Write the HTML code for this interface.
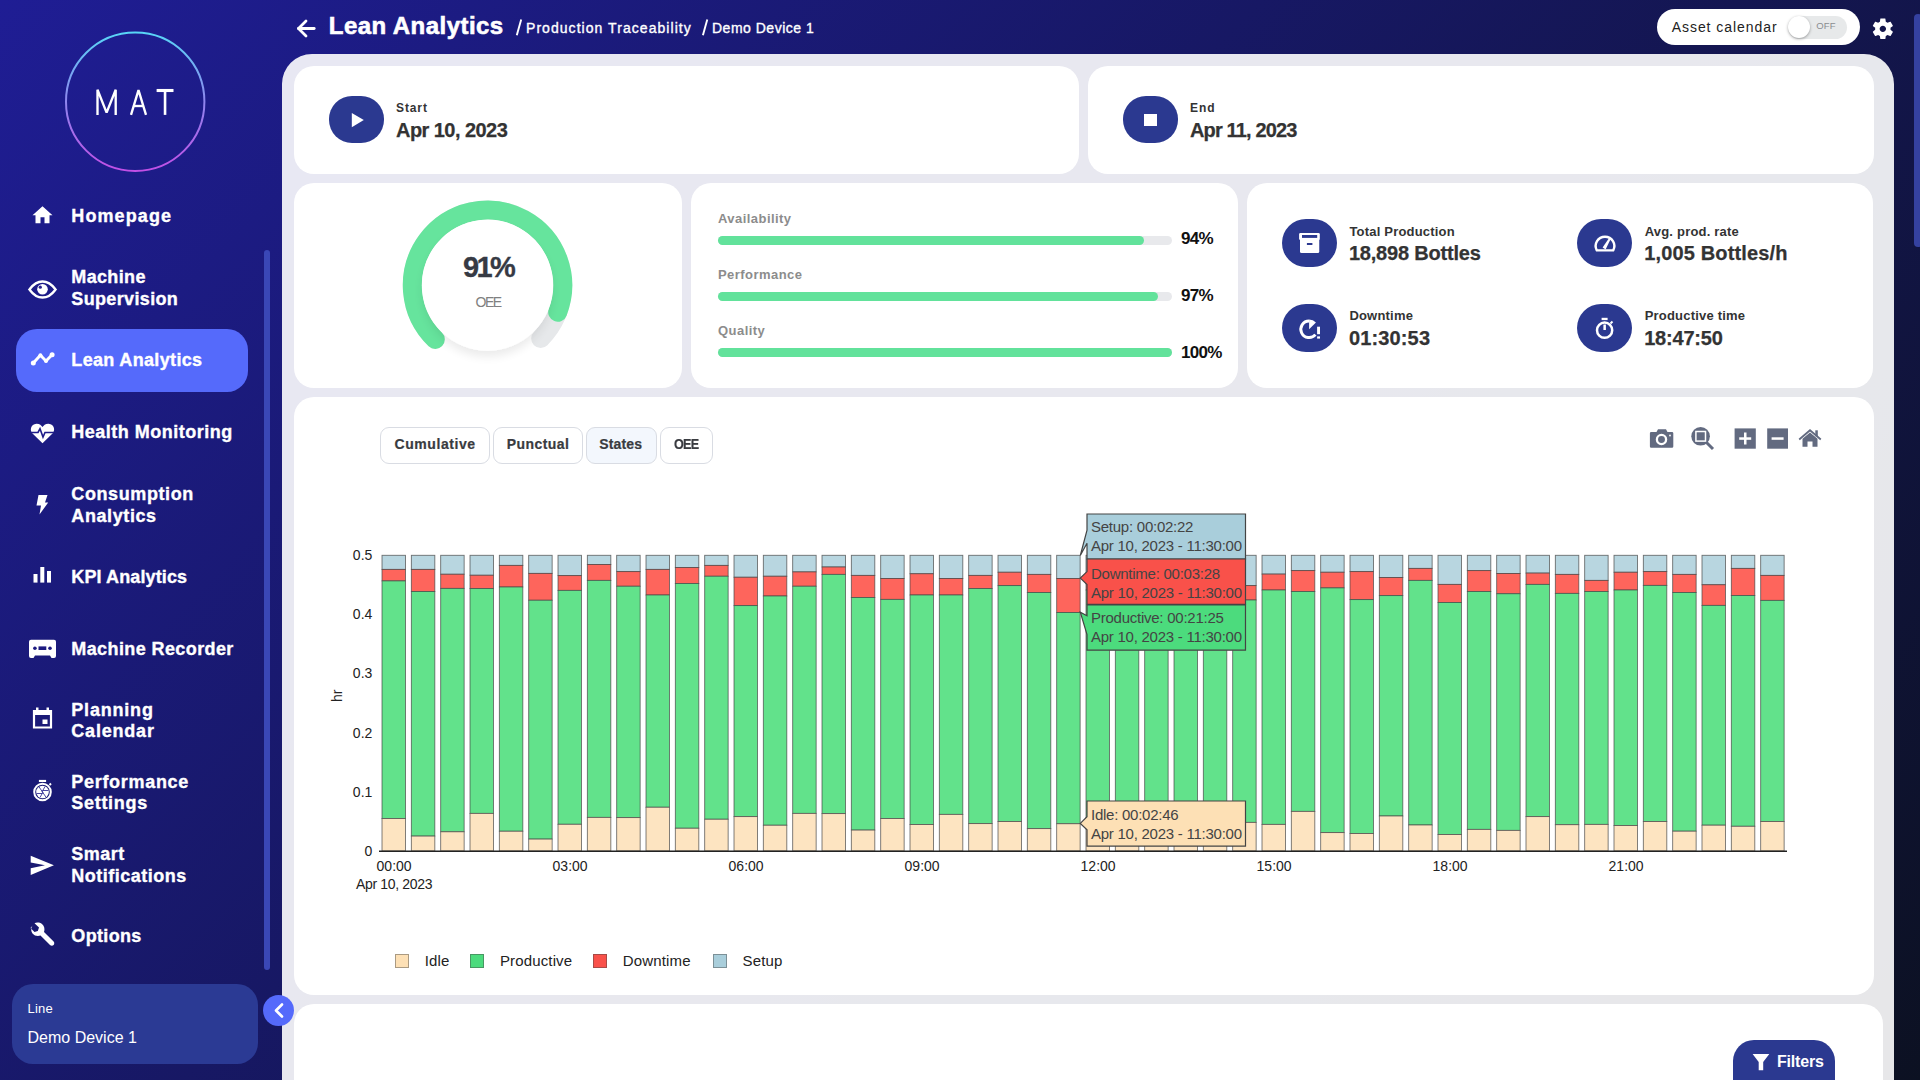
<!DOCTYPE html>
<html><head><meta charset="utf-8"><title>Lean Analytics</title>
<style>
html,body{margin:0;padding:0;width:1920px;height:1080px;overflow:hidden}
body{position:relative;background:linear-gradient(135deg,#1f1d94 0%,#0c1122 100%);font-family:"Liberation Sans", sans-serif}
.abs{position:absolute}
.t{position:absolute;line-height:1;white-space:nowrap;font-family:"Liberation Sans", sans-serif}
</style></head><body>
<svg class="abs" style="left:296px;top:18px" width="22" height="21" viewBox="0 0 22 21"><g fill="none" stroke="#fff" stroke-width="2.8" stroke-linecap="round" stroke-linejoin="round"><line x1="2.5" y1="10.5" x2="18.2" y2="10.5"/><polyline points="10,3 2.5,10.5 10,18"/></g></svg>
<div class="t" style="left:328.80px;top:14.20px;font-size:24px;font-weight:bold;color:#fff;letter-spacing:0.45px;-webkit-text-stroke:0.6px #fff;">Lean Analytics</div>
<svg class="abs" style="left:0;top:0" width="900" height="50"><g stroke="#fff" stroke-width="1.9" stroke-linecap="butt"><line x1="516.8" y1="35.3" x2="521.2" y2="19.4"/><line x1="702.9" y1="35.3" x2="707.3" y2="19.4"/></g></svg>
<div class="t" style="left:526.00px;top:20.78px;font-size:14px;font-weight:normal;color:#fff;letter-spacing:1.05px;-webkit-text-stroke:0.35px #fff;">Production Traceability</div>
<div class="t" style="left:712.00px;top:20.78px;font-size:14px;font-weight:normal;color:#fff;letter-spacing:0.5px;-webkit-text-stroke:0.35px #fff;">Demo Device 1</div>
<div class="abs" style="left:1657px;top:9px;width:203px;height:36px;border-radius:18px;background:#fff"></div>
<div class="t" style="left:1671.70px;top:20.08px;font-size:14px;font-weight:normal;color:#222;letter-spacing:0.95px;">Asset calendar</div>
<div class="abs" style="left:1787.5px;top:15.6px;width:59px;height:23px;border-radius:11.5px;background:#e7e9ea"></div>
<div class="t" style="left:1816.30px;top:21.49px;font-size:9.5px;font-weight:normal;color:#8a8d90;letter-spacing:0.1px;">OFF</div>
<div class="abs" style="left:1787.7px;top:16px;width:22px;height:22px;border-radius:50%;background:#fff;box-shadow:0 1px 3px rgba(0,0,0,0.35)"></div>
<svg class="abs" style="left:1869.6px;top:15.5px" width="25.7" height="25.7" viewBox="0 0 24 24"><path fill="#fff" d="M19.14 12.94c.04-.3.06-.61.06-.94 0-.32-.02-.64-.07-.94l2.03-1.58c.18-.14.23-.41.12-.61l-1.92-3.32c-.12-.22-.37-.29-.59-.22l-2.39.96c-.5-.38-1.03-.7-1.62-.94l-.36-2.54c-.04-.24-.24-.41-.48-.41h-3.84c-.24 0-.43.17-.47.41l-.36 2.54c-.59.24-1.13.57-1.62.94l-2.39-.96c-.22-.08-.47 0-.59.22L2.74 8.87c-.12.21-.08.47.12.61l2.03 1.58c-.05.3-.09.63-.09.94s.02.64.07.94l-2.03 1.58c-.18.14-.23.41-.12.61l1.92 3.32c.12.22.37.29.59.22l2.39-.96c.5.38 1.03.7 1.62.94l.36 2.54c.05.24.24.41.48.41h3.84c.24 0 .44-.17.47-.41l.36-2.54c.59-.24 1.13-.56 1.62-.94l2.39.96c.22.08.47 0 .59-.22l1.92-3.32c.12-.22.07-.47-.12-.61l-2.01-1.58zM12 15c-1.65 0-3-1.35-3-3s1.35-3 3-3 3 1.35 3 3-1.35 3-3 3z"/></svg>
<div class="abs" style="left:1914px;top:14px;width:8px;height:233px;border-radius:4px;background:#3541a0"></div>
<div class="abs" style="left:282px;top:54px;width:1612px;height:1100px;border-radius:30px 30px 0 0;background:rgba(255,255,255,0.9)"></div>
<div class="abs" style="left:294px;top:66px;width:785px;height:108px;border-radius:20px;background:#fff"></div>
<div class="abs" style="left:1088px;top:66px;width:786px;height:108px;border-radius:20px;background:#fff"></div>
<div class="abs" style="left:294px;top:183px;width:388px;height:205px;border-radius:20px;background:#fff"></div>
<div class="abs" style="left:691px;top:183px;width:547px;height:205px;border-radius:20px;background:#fff"></div>
<div class="abs" style="left:1247px;top:183px;width:626px;height:205px;border-radius:20px;background:#fff"></div>
<div class="abs" style="left:294px;top:397px;width:1580px;height:598px;border-radius:20px;background:#fff"></div>
<div class="abs" style="left:294px;top:1004px;width:1589px;height:196px;border-radius:20px;background:#fff"></div>
<div class="abs" style="left:329px;top:96px;width:55px;height:47px;border-radius:23px / 23px;background:#2b3990"></div>
<svg class="abs" style="left:329px;top:96px" width="55" height="47"><polygon points="22.8,17 34.8,24.1 22.8,31.2" fill="#fff"/></svg>
<div class="t" style="left:396.00px;top:101.60px;font-size:12px;font-weight:bold;color:#333;letter-spacing:0.9px;">Start</div>
<div class="t" style="left:396.00px;top:120.23px;font-size:20px;font-weight:bold;color:#333;letter-spacing:-0.55px;-webkit-text-stroke:0.25px #333;">Apr 10, 2023</div>
<div class="abs" style="left:1123px;top:96px;width:55px;height:47px;border-radius:23px;background:#2b3990"></div>
<div class="abs" style="left:1144.4px;top:114.2px;width:13px;height:12px;background:#fff"></div>
<div class="t" style="left:1190.00px;top:101.60px;font-size:12px;font-weight:bold;color:#333;letter-spacing:0.9px;">End</div>
<div class="t" style="left:1190.00px;top:120.23px;font-size:20px;font-weight:bold;color:#333;letter-spacing:-0.85px;-webkit-text-stroke:0.25px #333;">Apr 11, 2023</div>
<svg class="abs" style="left:0;top:0" width="700" height="400" viewBox="0 0 700 400">
<defs><filter id="sh" x="-30%" y="-30%" width="160%" height="170%"><feGaussianBlur in="SourceAlpha" stdDeviation="5"/><feOffset dy="6"/><feComponentTransfer><feFuncA type="linear" slope="0.08"/></feComponentTransfer><feMerge><feMergeNode/><feMergeNode in="SourceGraphic"/></feMerge></filter></defs>
<path d="M435.26,339.39 A75.2,75.2 0 1 1 540.67,338.47" fill="none" stroke="#e6e8ea" stroke-width="19" stroke-linecap="round"/>
<path d="M435.26,339.39 A75.2,75.2 0 1 1 557.71,312.25" fill="none" stroke="#66e49d" stroke-width="19" stroke-linecap="round"/>
<circle cx="487.5" cy="285.3" r="65.5" fill="#fff" filter="url(#sh)"/>
</svg>
<div class="t" style="left:288.20px;width:400px;text-align:center;top:253.20px;font-size:29px;font-weight:bold;color:#363a44;letter-spacing:-2.6px;-webkit-text-stroke:0.3px #363a44;">91%</div>
<div class="t" style="left:288.10px;width:400px;text-align:center;top:295.08px;font-size:14px;font-weight:normal;color:#808080;letter-spacing:-1.4px;">OEE</div>
<div class="t" style="left:718.00px;top:211.84px;font-size:13px;font-weight:bold;color:#8c8c8c;letter-spacing:0.45px;">Availability</div>
<div class="abs" style="left:718px;top:235.9px;width:454px;height:9px;border-radius:4.5px;background:#e8e9ec"></div>
<div class="abs" style="left:718px;top:235.9px;width:425.8px;height:9px;border-radius:4.5px;background:#62e29b"></div>
<div class="t" style="left:1181.00px;top:230.41px;font-size:17px;font-weight:bold;color:#111;letter-spacing:-0.7px;">94%</div>
<div class="t" style="left:718.00px;top:267.84px;font-size:13px;font-weight:bold;color:#8c8c8c;letter-spacing:0.45px;">Performance</div>
<div class="abs" style="left:718px;top:291.9px;width:454px;height:9px;border-radius:4.5px;background:#e8e9ec"></div>
<div class="abs" style="left:718px;top:291.9px;width:439.6px;height:9px;border-radius:4.5px;background:#62e29b"></div>
<div class="t" style="left:1181.00px;top:287.41px;font-size:17px;font-weight:bold;color:#111;letter-spacing:-0.7px;">97%</div>
<div class="t" style="left:718.00px;top:323.84px;font-size:13px;font-weight:bold;color:#8c8c8c;letter-spacing:0.45px;">Quality</div>
<div class="abs" style="left:718px;top:348.2px;width:454px;height:9px;border-radius:4.5px;background:#e8e9ec"></div>
<div class="abs" style="left:718px;top:348.2px;width:454.0px;height:9px;border-radius:4.5px;background:#62e29b"></div>
<div class="t" style="left:1181.00px;top:343.61px;font-size:17px;font-weight:bold;color:#111;letter-spacing:-0.7px;">100%</div>
<div class="abs" style="left:1282px;top:219px;width:55px;height:48px;border-radius:24px;background:#2b3990"></div>
<div class="t" style="left:1349.40px;top:225.24px;font-size:13px;font-weight:bold;color:#333;letter-spacing:0.2px;">Total Production</div>
<div class="t" style="left:1348.90px;top:243.03px;font-size:20px;font-weight:bold;color:#333;letter-spacing:-0.2px;-webkit-text-stroke:0.25px #333;">18,898 Bottles</div>
<svg class="abs" style="left:1282px;top:219px" width="55" height="48" fill="#fff"><rect x="17.1" y="14" width="20.7" height="7" rx="1.3"/><path d="M18,20 H37.25 V32.6 Q37.25,34.1 35.75,34.1 H19.5 Q18,34.1 18,32.6 Z"/><rect x="20" y="16" width="15.2" height="2.9" fill="#2b3990"/><rect x="24.9" y="24" width="5.5" height="2" fill="#2b3990"/></svg>
<div class="abs" style="left:1577px;top:219px;width:55px;height:48px;border-radius:24px;background:#2b3990"></div>
<div class="t" style="left:1644.70px;top:225.24px;font-size:13px;font-weight:bold;color:#333;letter-spacing:0.2px;">Avg. prod. rate</div>
<div class="t" style="left:1644.20px;top:243.03px;font-size:20px;font-weight:bold;color:#333;letter-spacing:0.15px;-webkit-text-stroke:0.25px #333;">1,005 Bottles/h</div>
<svg class="abs" style="left:1577px;top:219px" width="55" height="48"><path d="M19.8,31.4 A9.3,9.3 0 1 1 36.2,31.4 Z" fill="none" stroke="#fff" stroke-width="2.4" stroke-linejoin="round"/><path d="M25.6,28.6 L31.8,19.6 L33.4,20.6 L28.6,30.4 Z" fill="#fff"/></svg>
<div class="abs" style="left:1282px;top:303.5px;width:55px;height:48px;border-radius:24px;background:#2b3990"></div>
<div class="t" style="left:1349.40px;top:309.34px;font-size:13px;font-weight:bold;color:#333;letter-spacing:0.2px;">Downtime</div>
<div class="t" style="left:1348.90px;top:327.63px;font-size:20px;font-weight:bold;color:#333;letter-spacing:0.15px;-webkit-text-stroke:0.25px #333;">01:30:53</div>
<svg class="abs" style="left:1282px;top:303.5px" width="55" height="48"><path d="M27.1,17.05 A8.25,8.25 0 1 0 33.42,30.6" fill="none" stroke="#fff" stroke-width="2.9"/><path d="M27.1,25.3 L27.1,15.6 A9.7,9.7 0 0 1 33.96,18.44 Z" fill="#fff"/><rect x="35.1" y="22.7" width="2.9" height="7.5" fill="#fff"/><rect x="35.1" y="32.4" width="2.9" height="2.2" fill="#fff"/></svg>
<div class="abs" style="left:1577px;top:303.5px;width:55px;height:48px;border-radius:24px;background:#2b3990"></div>
<div class="t" style="left:1644.70px;top:309.34px;font-size:13px;font-weight:bold;color:#333;letter-spacing:0.2px;">Productive time</div>
<div class="t" style="left:1644.20px;top:327.63px;font-size:20px;font-weight:bold;color:#333;letter-spacing:-0.2px;-webkit-text-stroke:0.25px #333;">18:47:50</div>
<svg class="abs" style="left:1577px;top:303.5px" width="55" height="48"><circle cx="27.6" cy="26.2" r="7.6" fill="none" stroke="#fff" stroke-width="2.5"/><rect x="24.6" y="13.8" width="6" height="2.3" fill="#fff"/><rect x="26.4" y="20.5" width="2.5" height="5.5" fill="#fff"/><line x1="33.5" y1="19.5" x2="35.5" y2="17.5" stroke="#fff" stroke-width="2"/></svg>
<div class="abs" style="left:380.4px;top:427.4px;width:109.9px;height:36.8px;box-sizing:border-box;border:1px solid #d9dce3;border-radius:9px;background:#fff"></div>
<div class="t" style="left:394.60px;top:437.18px;font-size:14px;font-weight:bold;color:#393b40;letter-spacing:0.55px;-webkit-text-stroke:0.2px #393b40;">Cumulative</div>
<div class="abs" style="left:493.4px;top:427.4px;width:89.3px;height:36.8px;box-sizing:border-box;border:1px solid #d9dce3;border-radius:9px;background:#fff"></div>
<div class="t" style="left:506.70px;top:437.18px;font-size:14px;font-weight:bold;color:#393b40;letter-spacing:0.45px;-webkit-text-stroke:0.2px #393b40;">Punctual</div>
<div class="abs" style="left:585.5px;top:427.4px;width:71.8px;height:36.8px;box-sizing:border-box;border:1px solid #d9dce3;border-radius:9px;background:#f3f7fd"></div>
<div class="t" style="left:599.30px;top:437.18px;font-size:14px;font-weight:bold;color:#393b40;letter-spacing:0.15px;-webkit-text-stroke:0.2px #393b40;">States</div>
<div class="abs" style="left:659.5px;top:427.4px;width:53.2px;height:36.8px;box-sizing:border-box;border:1px solid #d9dce3;border-radius:9px;background:#fff"></div>
<div class="t" style="left:673.50px;top:437.18px;font-size:14px;font-weight:bold;color:#393b40;letter-spacing:-0.8px;-webkit-text-stroke:0.2px #393b40;transform:scaleX(0.9);transform-origin:0 0;">OEE</div>
<svg class="abs" style="left:1640px;top:420px" width="190" height="40" viewBox="1640 420 190 40">
<path fill="#626a80" d="M1652,432 H1656.5 L1658,429.2 H1666 L1667.5,432 H1672 Q1673.3,432 1673.3,433.3 V446.4 Q1673.3,447.7 1672,447.7 H1651.2 Q1649.9,447.7 1649.9,446.4 V433.3 Q1649.9,432 1651.2,432 Z"/>
<circle cx="1661.5" cy="439.5" r="4.6" fill="none" stroke="#fff" stroke-width="2.3"/>
<circle cx="1670" cy="435.5" r="0.9" fill="#fff"/>
<circle cx="1700.6" cy="436.3" r="9.3" fill="#626a80"/>
<rect x="1695.9" y="431.5" width="9.6" height="9.6" fill="none" stroke="#fff" stroke-width="1.5"/>
<line x1="1706.5" y1="442.5" x2="1713" y2="449" stroke="#626a80" stroke-width="3"/>
<rect x="1734.6" y="428.4" width="21.2" height="20.3" fill="#626a80"/>
<rect x="1739.2" y="437.3" width="12" height="2.5" fill="#fff"/><rect x="1744" y="432.5" width="2.5" height="12" fill="#fff"/>
<rect x="1767.2" y="428.4" width="20.8" height="20.3" fill="#626a80"/>
<rect x="1771.6" y="437.3" width="12" height="2.5" fill="#fff"/>
<path d="M1799.2,439.5 L1810,430.3 L1820.8,439.5" fill="none" stroke="#626a80" stroke-width="1.8"/>
<path fill="#626a80" d="M1802.5,438.8 L1810,432.5 L1817.5,438.8 V446.7 H1812.5 V441.5 H1807.5 V446.7 H1802.5 Z"/>
<rect x="1815.3" y="430.3" width="2.5" height="6" fill="#626a80"/>
</svg>
<svg class="abs" style="left:0;top:0" width="1920" height="1080" viewBox="0 0 1920 1080">
<g stroke="#444" stroke-opacity="0.75" stroke-width="0.9">
<rect x="382.01" y="555.30" width="23.47" height="14.10" fill="#b8d6e0"/><rect x="382.01" y="569.40" width="23.47" height="11.50" fill="#fe655c"/><rect x="382.01" y="580.90" width="23.47" height="237.60" fill="#62e28b"/><rect x="382.01" y="818.50" width="23.47" height="32.50" fill="#fde4c1"/>
<rect x="411.35" y="555.30" width="23.47" height="14.10" fill="#b8d6e0"/><rect x="411.35" y="569.40" width="23.47" height="22.10" fill="#fe655c"/><rect x="411.35" y="591.50" width="23.47" height="244.60" fill="#62e28b"/><rect x="411.35" y="836.10" width="23.47" height="14.90" fill="#fde4c1"/>
<rect x="440.68" y="555.30" width="23.47" height="18.95" fill="#b8d6e0"/><rect x="440.68" y="574.25" width="23.47" height="14.15" fill="#fe655c"/><rect x="440.68" y="588.40" width="23.47" height="243.40" fill="#62e28b"/><rect x="440.68" y="831.80" width="23.47" height="19.20" fill="#fde4c1"/>
<rect x="470.01" y="555.30" width="23.47" height="19.95" fill="#b8d6e0"/><rect x="470.01" y="575.25" width="23.47" height="13.25" fill="#fe655c"/><rect x="470.01" y="588.50" width="23.47" height="224.90" fill="#62e28b"/><rect x="470.01" y="813.40" width="23.47" height="37.60" fill="#fde4c1"/>
<rect x="499.35" y="555.30" width="23.47" height="10.10" fill="#b8d6e0"/><rect x="499.35" y="565.40" width="23.47" height="21.60" fill="#fe655c"/><rect x="499.35" y="587.00" width="23.47" height="244.25" fill="#62e28b"/><rect x="499.35" y="831.25" width="23.47" height="19.75" fill="#fde4c1"/>
<rect x="528.68" y="555.30" width="23.47" height="18.10" fill="#b8d6e0"/><rect x="528.68" y="573.40" width="23.47" height="26.85" fill="#fe655c"/><rect x="528.68" y="600.25" width="23.47" height="238.85" fill="#62e28b"/><rect x="528.68" y="839.10" width="23.47" height="11.90" fill="#fde4c1"/>
<rect x="558.01" y="555.30" width="23.47" height="20.30" fill="#b8d6e0"/><rect x="558.01" y="575.60" width="23.47" height="14.80" fill="#fe655c"/><rect x="558.01" y="590.40" width="23.47" height="233.90" fill="#62e28b"/><rect x="558.01" y="824.30" width="23.47" height="26.70" fill="#fde4c1"/>
<rect x="587.35" y="555.30" width="23.47" height="9.20" fill="#b8d6e0"/><rect x="587.35" y="564.50" width="23.47" height="15.90" fill="#fe655c"/><rect x="587.35" y="580.40" width="23.47" height="237.00" fill="#62e28b"/><rect x="587.35" y="817.40" width="23.47" height="33.60" fill="#fde4c1"/>
<rect x="616.68" y="555.30" width="23.47" height="16.30" fill="#b8d6e0"/><rect x="616.68" y="571.60" width="23.47" height="14.65" fill="#fe655c"/><rect x="616.68" y="586.25" width="23.47" height="231.35" fill="#62e28b"/><rect x="616.68" y="817.60" width="23.47" height="33.40" fill="#fde4c1"/>
<rect x="646.01" y="555.30" width="23.47" height="14.10" fill="#b8d6e0"/><rect x="646.01" y="569.40" width="23.47" height="25.60" fill="#fe655c"/><rect x="646.01" y="595.00" width="23.47" height="212.25" fill="#62e28b"/><rect x="646.01" y="807.25" width="23.47" height="43.75" fill="#fde4c1"/>
<rect x="675.34" y="555.30" width="23.47" height="12.20" fill="#b8d6e0"/><rect x="675.34" y="567.50" width="23.47" height="16.00" fill="#fe655c"/><rect x="675.34" y="583.50" width="23.47" height="244.75" fill="#62e28b"/><rect x="675.34" y="828.25" width="23.47" height="22.75" fill="#fde4c1"/>
<rect x="704.68" y="555.30" width="23.47" height="10.10" fill="#b8d6e0"/><rect x="704.68" y="565.40" width="23.47" height="10.85" fill="#fe655c"/><rect x="704.68" y="576.25" width="23.47" height="243.00" fill="#62e28b"/><rect x="704.68" y="819.25" width="23.47" height="31.75" fill="#fde4c1"/>
<rect x="734.01" y="555.30" width="23.47" height="21.95" fill="#b8d6e0"/><rect x="734.01" y="577.25" width="23.47" height="28.35" fill="#fe655c"/><rect x="734.01" y="605.60" width="23.47" height="211.00" fill="#62e28b"/><rect x="734.01" y="816.60" width="23.47" height="34.40" fill="#fde4c1"/>
<rect x="763.34" y="555.30" width="23.47" height="20.95" fill="#b8d6e0"/><rect x="763.34" y="576.25" width="23.47" height="19.75" fill="#fe655c"/><rect x="763.34" y="596.00" width="23.47" height="229.25" fill="#62e28b"/><rect x="763.34" y="825.25" width="23.47" height="25.75" fill="#fde4c1"/>
<rect x="792.68" y="555.30" width="23.47" height="16.60" fill="#b8d6e0"/><rect x="792.68" y="571.90" width="23.47" height="14.35" fill="#fe655c"/><rect x="792.68" y="586.25" width="23.47" height="227.15" fill="#62e28b"/><rect x="792.68" y="813.40" width="23.47" height="37.60" fill="#fde4c1"/>
<rect x="822.01" y="555.30" width="23.47" height="11.70" fill="#b8d6e0"/><rect x="822.01" y="567.00" width="23.47" height="7.40" fill="#fe655c"/><rect x="822.01" y="574.40" width="23.47" height="239.20" fill="#62e28b"/><rect x="822.01" y="813.60" width="23.47" height="37.40" fill="#fde4c1"/>
<rect x="851.34" y="555.30" width="23.47" height="20.10" fill="#b8d6e0"/><rect x="851.34" y="575.40" width="23.47" height="22.10" fill="#fe655c"/><rect x="851.34" y="597.50" width="23.47" height="232.60" fill="#62e28b"/><rect x="851.34" y="830.10" width="23.47" height="20.90" fill="#fde4c1"/>
<rect x="880.68" y="555.30" width="23.47" height="23.20" fill="#b8d6e0"/><rect x="880.68" y="578.50" width="23.47" height="20.90" fill="#fe655c"/><rect x="880.68" y="599.40" width="23.47" height="219.10" fill="#62e28b"/><rect x="880.68" y="818.50" width="23.47" height="32.50" fill="#fde4c1"/>
<rect x="910.01" y="555.30" width="23.47" height="18.45" fill="#b8d6e0"/><rect x="910.01" y="573.75" width="23.47" height="21.25" fill="#fe655c"/><rect x="910.01" y="595.00" width="23.47" height="229.50" fill="#62e28b"/><rect x="910.01" y="824.50" width="23.47" height="26.50" fill="#fde4c1"/>
<rect x="939.34" y="555.30" width="23.47" height="23.20" fill="#b8d6e0"/><rect x="939.34" y="578.50" width="23.47" height="16.50" fill="#fe655c"/><rect x="939.34" y="595.00" width="23.47" height="219.40" fill="#62e28b"/><rect x="939.34" y="814.40" width="23.47" height="36.60" fill="#fde4c1"/>
<rect x="968.67" y="555.30" width="23.47" height="20.10" fill="#b8d6e0"/><rect x="968.67" y="575.40" width="23.47" height="13.10" fill="#fe655c"/><rect x="968.67" y="588.50" width="23.47" height="235.10" fill="#62e28b"/><rect x="968.67" y="823.60" width="23.47" height="27.40" fill="#fde4c1"/>
<rect x="998.01" y="555.30" width="23.47" height="16.95" fill="#b8d6e0"/><rect x="998.01" y="572.25" width="23.47" height="13.35" fill="#fe655c"/><rect x="998.01" y="585.60" width="23.47" height="235.90" fill="#62e28b"/><rect x="998.01" y="821.50" width="23.47" height="29.50" fill="#fde4c1"/>
<rect x="1027.34" y="555.30" width="23.47" height="19.10" fill="#b8d6e0"/><rect x="1027.34" y="574.40" width="23.47" height="18.10" fill="#fe655c"/><rect x="1027.34" y="592.50" width="23.47" height="236.10" fill="#62e28b"/><rect x="1027.34" y="828.60" width="23.47" height="22.40" fill="#fde4c1"/>
<rect x="1056.67" y="555.30" width="23.47" height="23.20" fill="#b8d6e0"/><rect x="1056.67" y="578.50" width="23.47" height="34.00" fill="#fe655c"/><rect x="1056.67" y="612.50" width="23.47" height="211.25" fill="#62e28b"/><rect x="1056.67" y="823.75" width="23.47" height="27.25" fill="#fde4c1"/>
<rect x="1086.01" y="555.30" width="23.47" height="18.70" fill="#b8d6e0"/><rect x="1086.01" y="574.00" width="23.47" height="16.00" fill="#fe655c"/><rect x="1086.01" y="590.00" width="23.47" height="234.00" fill="#62e28b"/><rect x="1086.01" y="824.00" width="23.47" height="27.00" fill="#fde4c1"/>
<rect x="1115.34" y="555.30" width="23.47" height="18.70" fill="#b8d6e0"/><rect x="1115.34" y="574.00" width="23.47" height="16.00" fill="#fe655c"/><rect x="1115.34" y="590.00" width="23.47" height="234.00" fill="#62e28b"/><rect x="1115.34" y="824.00" width="23.47" height="27.00" fill="#fde4c1"/>
<rect x="1144.67" y="555.30" width="23.47" height="18.70" fill="#b8d6e0"/><rect x="1144.67" y="574.00" width="23.47" height="16.00" fill="#fe655c"/><rect x="1144.67" y="590.00" width="23.47" height="234.00" fill="#62e28b"/><rect x="1144.67" y="824.00" width="23.47" height="27.00" fill="#fde4c1"/>
<rect x="1174.01" y="555.30" width="23.47" height="18.70" fill="#b8d6e0"/><rect x="1174.01" y="574.00" width="23.47" height="16.00" fill="#fe655c"/><rect x="1174.01" y="590.00" width="23.47" height="234.00" fill="#62e28b"/><rect x="1174.01" y="824.00" width="23.47" height="27.00" fill="#fde4c1"/>
<rect x="1203.34" y="555.30" width="23.47" height="18.70" fill="#b8d6e0"/><rect x="1203.34" y="574.00" width="23.47" height="16.00" fill="#fe655c"/><rect x="1203.34" y="590.00" width="23.47" height="234.00" fill="#62e28b"/><rect x="1203.34" y="824.00" width="23.47" height="27.00" fill="#fde4c1"/>
<rect x="1232.67" y="555.30" width="23.47" height="30.30" fill="#b8d6e0"/><rect x="1232.67" y="585.60" width="23.47" height="14.40" fill="#fe655c"/><rect x="1232.67" y="600.00" width="23.47" height="222.40" fill="#62e28b"/><rect x="1232.67" y="822.40" width="23.47" height="28.60" fill="#fde4c1"/>
<rect x="1262.01" y="555.30" width="23.47" height="18.80" fill="#b8d6e0"/><rect x="1262.01" y="574.10" width="23.47" height="15.90" fill="#fe655c"/><rect x="1262.01" y="590.00" width="23.47" height="234.40" fill="#62e28b"/><rect x="1262.01" y="824.40" width="23.47" height="26.60" fill="#fde4c1"/>
<rect x="1291.34" y="555.30" width="23.47" height="15.30" fill="#b8d6e0"/><rect x="1291.34" y="570.60" width="23.47" height="20.90" fill="#fe655c"/><rect x="1291.34" y="591.50" width="23.47" height="219.90" fill="#62e28b"/><rect x="1291.34" y="811.40" width="23.47" height="39.60" fill="#fde4c1"/>
<rect x="1320.67" y="555.30" width="23.47" height="16.95" fill="#b8d6e0"/><rect x="1320.67" y="572.25" width="23.47" height="15.65" fill="#fe655c"/><rect x="1320.67" y="587.90" width="23.47" height="244.70" fill="#62e28b"/><rect x="1320.67" y="832.60" width="23.47" height="18.40" fill="#fde4c1"/>
<rect x="1350.00" y="555.30" width="23.47" height="16.30" fill="#b8d6e0"/><rect x="1350.00" y="571.60" width="23.47" height="28.00" fill="#fe655c"/><rect x="1350.00" y="599.60" width="23.47" height="233.90" fill="#62e28b"/><rect x="1350.00" y="833.50" width="23.47" height="17.50" fill="#fde4c1"/>
<rect x="1379.34" y="555.30" width="23.47" height="22.20" fill="#b8d6e0"/><rect x="1379.34" y="577.50" width="23.47" height="18.10" fill="#fe655c"/><rect x="1379.34" y="595.60" width="23.47" height="220.40" fill="#62e28b"/><rect x="1379.34" y="816.00" width="23.47" height="35.00" fill="#fde4c1"/>
<rect x="1408.67" y="555.30" width="23.47" height="13.10" fill="#b8d6e0"/><rect x="1408.67" y="568.40" width="23.47" height="12.00" fill="#fe655c"/><rect x="1408.67" y="580.40" width="23.47" height="244.60" fill="#62e28b"/><rect x="1408.67" y="825.00" width="23.47" height="26.00" fill="#fde4c1"/>
<rect x="1438.00" y="555.30" width="23.47" height="29.10" fill="#b8d6e0"/><rect x="1438.00" y="584.40" width="23.47" height="18.10" fill="#fe655c"/><rect x="1438.00" y="602.50" width="23.47" height="232.00" fill="#62e28b"/><rect x="1438.00" y="834.50" width="23.47" height="16.50" fill="#fde4c1"/>
<rect x="1467.34" y="555.30" width="23.47" height="15.30" fill="#b8d6e0"/><rect x="1467.34" y="570.60" width="23.47" height="20.90" fill="#fe655c"/><rect x="1467.34" y="591.50" width="23.47" height="237.90" fill="#62e28b"/><rect x="1467.34" y="829.40" width="23.47" height="21.60" fill="#fde4c1"/>
<rect x="1496.67" y="555.30" width="23.47" height="18.20" fill="#b8d6e0"/><rect x="1496.67" y="573.50" width="23.47" height="20.25" fill="#fe655c"/><rect x="1496.67" y="593.75" width="23.47" height="236.65" fill="#62e28b"/><rect x="1496.67" y="830.40" width="23.47" height="20.60" fill="#fde4c1"/>
<rect x="1526.00" y="555.30" width="23.47" height="17.80" fill="#b8d6e0"/><rect x="1526.00" y="573.10" width="23.47" height="11.30" fill="#fe655c"/><rect x="1526.00" y="584.40" width="23.47" height="232.20" fill="#62e28b"/><rect x="1526.00" y="816.60" width="23.47" height="34.40" fill="#fde4c1"/>
<rect x="1555.34" y="555.30" width="23.47" height="19.10" fill="#b8d6e0"/><rect x="1555.34" y="574.40" width="23.47" height="19.00" fill="#fe655c"/><rect x="1555.34" y="593.40" width="23.47" height="231.30" fill="#62e28b"/><rect x="1555.34" y="824.70" width="23.47" height="26.30" fill="#fde4c1"/>
<rect x="1584.67" y="555.30" width="23.47" height="25.10" fill="#b8d6e0"/><rect x="1584.67" y="580.40" width="23.47" height="11.10" fill="#fe655c"/><rect x="1584.67" y="591.50" width="23.47" height="232.90" fill="#62e28b"/><rect x="1584.67" y="824.40" width="23.47" height="26.60" fill="#fde4c1"/>
<rect x="1614.00" y="555.30" width="23.47" height="16.95" fill="#b8d6e0"/><rect x="1614.00" y="572.25" width="23.47" height="17.75" fill="#fe655c"/><rect x="1614.00" y="590.00" width="23.47" height="235.50" fill="#62e28b"/><rect x="1614.00" y="825.50" width="23.47" height="25.50" fill="#fde4c1"/>
<rect x="1643.33" y="555.30" width="23.47" height="16.30" fill="#b8d6e0"/><rect x="1643.33" y="571.60" width="23.47" height="13.80" fill="#fe655c"/><rect x="1643.33" y="585.40" width="23.47" height="236.10" fill="#62e28b"/><rect x="1643.33" y="821.50" width="23.47" height="29.50" fill="#fde4c1"/>
<rect x="1672.67" y="555.30" width="23.47" height="19.10" fill="#b8d6e0"/><rect x="1672.67" y="574.40" width="23.47" height="18.10" fill="#fe655c"/><rect x="1672.67" y="592.50" width="23.47" height="238.70" fill="#62e28b"/><rect x="1672.67" y="831.20" width="23.47" height="19.80" fill="#fde4c1"/>
<rect x="1702.00" y="555.30" width="23.47" height="29.45" fill="#b8d6e0"/><rect x="1702.00" y="584.75" width="23.47" height="20.65" fill="#fe655c"/><rect x="1702.00" y="605.40" width="23.47" height="219.80" fill="#62e28b"/><rect x="1702.00" y="825.20" width="23.47" height="25.80" fill="#fde4c1"/>
<rect x="1731.33" y="555.30" width="23.47" height="13.10" fill="#b8d6e0"/><rect x="1731.33" y="568.40" width="23.47" height="27.10" fill="#fe655c"/><rect x="1731.33" y="595.50" width="23.47" height="230.80" fill="#62e28b"/><rect x="1731.33" y="826.30" width="23.47" height="24.70" fill="#fde4c1"/>
<rect x="1760.67" y="555.30" width="23.47" height="20.10" fill="#b8d6e0"/><rect x="1760.67" y="575.40" width="23.47" height="25.00" fill="#fe655c"/><rect x="1760.67" y="600.40" width="23.47" height="221.10" fill="#62e28b"/><rect x="1760.67" y="821.50" width="23.47" height="29.50" fill="#fde4c1"/>
</g>
<line x1="379" y1="851.2" x2="1787" y2="851.2" stroke="#222" stroke-width="1.6"/>
</svg>
<div class="t" style="right:1547.70px;top:843.93px;font-size:14px;font-weight:normal;color:#222;">0</div>
<div class="t" style="right:1547.70px;top:784.73px;font-size:14px;font-weight:normal;color:#222;">0.1</div>
<div class="t" style="right:1547.70px;top:725.53px;font-size:14px;font-weight:normal;color:#222;">0.2</div>
<div class="t" style="right:1547.70px;top:666.33px;font-size:14px;font-weight:normal;color:#222;">0.3</div>
<div class="t" style="right:1547.70px;top:607.13px;font-size:14px;font-weight:normal;color:#222;">0.4</div>
<div class="t" style="right:1547.70px;top:547.93px;font-size:14px;font-weight:normal;color:#222;">0.5</div>
<div class="t" style="left:330px;top:688px;font-size:14px;color:#222;transform:rotate(-90deg);transform-origin:7px 7px;line-height:14px">hr</div>
<div class="t" style="left:194.10px;width:400px;text-align:center;top:858.98px;font-size:14px;font-weight:normal;color:#222;">00:00</div>
<div class="t" style="left:370.10px;width:400px;text-align:center;top:858.98px;font-size:14px;font-weight:normal;color:#222;">03:00</div>
<div class="t" style="left:546.10px;width:400px;text-align:center;top:858.98px;font-size:14px;font-weight:normal;color:#222;">06:00</div>
<div class="t" style="left:722.10px;width:400px;text-align:center;top:858.98px;font-size:14px;font-weight:normal;color:#222;">09:00</div>
<div class="t" style="left:898.10px;width:400px;text-align:center;top:858.98px;font-size:14px;font-weight:normal;color:#222;">12:00</div>
<div class="t" style="left:1074.10px;width:400px;text-align:center;top:858.98px;font-size:14px;font-weight:normal;color:#222;">15:00</div>
<div class="t" style="left:1250.10px;width:400px;text-align:center;top:858.98px;font-size:14px;font-weight:normal;color:#222;">18:00</div>
<div class="t" style="left:1426.10px;width:400px;text-align:center;top:858.98px;font-size:14px;font-weight:normal;color:#222;">21:00</div>
<div class="t" style="left:194.10px;width:400px;text-align:center;top:876.58px;font-size:14px;font-weight:normal;color:#222;letter-spacing:-0.35px;">Apr 10, 2023</div>
<svg class="abs" style="left:1070px;top:483.79999999999995px" width="190" height="105.10000000000002" viewBox="1070 483.79999999999995 190 105.10000000000002"><path d="M1087,513.8 H1245.5 V558.9 H1087 V543 L1080.3,555.3 L1087,530 Z" fill="#a9cedb" stroke="#444" stroke-width="1.2"/></svg>
<div class="t" style="left:1091.00px;top:519.32px;font-size:15px;font-weight:normal;color:#444;letter-spacing:-0.25px;">Setup: 00:02:22</div>
<div class="t" style="left:1091.00px;top:538.02px;font-size:15px;font-weight:normal;color:#444;letter-spacing:-0.25px;">Apr 10, 2023 - 11:30:00</div>
<svg class="abs" style="left:1070px;top:529.4px" width="190" height="105.30000000000007" viewBox="1070 529.4 190 105.30000000000007"><path d="M1087,559.4 H1245.5 V604.7 H1087 V585 L1080.3,578.5 L1087,572 Z" fill="#f9514a" stroke="#444" stroke-width="1.2"/></svg>
<div class="t" style="left:1091.00px;top:565.82px;font-size:15px;font-weight:normal;color:#444;letter-spacing:-0.25px;">Downtime: 00:03:28</div>
<div class="t" style="left:1091.00px;top:584.62px;font-size:15px;font-weight:normal;color:#444;letter-spacing:-0.25px;">Apr 10, 2023 - 11:30:00</div>
<svg class="abs" style="left:1070px;top:575.3px" width="190" height="105.20000000000005" viewBox="1070 575.3 190 105.20000000000005"><path d="M1087,605.3 H1245.5 V650.5 H1087 V635 L1080.3,612.5 L1087,616 Z" fill="#4cdb7d" stroke="#444" stroke-width="1.2"/></svg>
<div class="t" style="left:1091.00px;top:610.22px;font-size:15px;font-weight:normal;color:#444;letter-spacing:-0.25px;">Productive: 00:21:25</div>
<div class="t" style="left:1091.00px;top:629.02px;font-size:15px;font-weight:normal;color:#444;letter-spacing:-0.25px;">Apr 10, 2023 - 11:30:00</div>
<svg class="abs" style="left:1070px;top:771.3px" width="190" height="105.10000000000002" viewBox="1070 771.3 190 105.10000000000002"><path d="M1087,801.3 H1245.5 V846.4 H1087 V830 L1080.3,823.75 L1087,817 Z" fill="#fde0b5" stroke="#444" stroke-width="1.2"/></svg>
<div class="t" style="left:1091.00px;top:806.62px;font-size:15px;font-weight:normal;color:#444;letter-spacing:-0.25px;">Idle: 00:02:46</div>
<div class="t" style="left:1091.00px;top:826.02px;font-size:15px;font-weight:normal;color:#444;letter-spacing:-0.25px;">Apr 10, 2023 - 11:30:00</div>
<div class="abs" style="left:394.7px;top:953.6px;width:14.2px;height:14.2px;box-sizing:border-box;border:1px solid rgba(68,68,68,0.45);background:#fde0b5"></div>
<div class="t" style="left:424.80px;top:953.37px;font-size:15px;font-weight:normal;color:#222;letter-spacing:0.15px;">Idle</div>
<div class="abs" style="left:470.1px;top:953.6px;width:14.2px;height:14.2px;box-sizing:border-box;border:1px solid rgba(68,68,68,0.45);background:#4cdb7d"></div>
<div class="t" style="left:499.90px;top:953.37px;font-size:15px;font-weight:normal;color:#222;letter-spacing:0.15px;">Productive</div>
<div class="abs" style="left:593.3px;top:953.6px;width:14.2px;height:14.2px;box-sizing:border-box;border:1px solid rgba(68,68,68,0.45);background:#f9514a"></div>
<div class="t" style="left:622.80px;top:953.37px;font-size:15px;font-weight:normal;color:#222;letter-spacing:0.15px;">Downtime</div>
<div class="abs" style="left:712.5px;top:953.6px;width:14.2px;height:14.2px;box-sizing:border-box;border:1px solid rgba(68,68,68,0.45);background:#a9cedb"></div>
<div class="t" style="left:742.50px;top:953.37px;font-size:15px;font-weight:normal;color:#222;letter-spacing:0.15px;">Setup</div>
<div class="abs" style="left:1733px;top:1040px;width:102px;height:60px;border-radius:21px;background:#2b3990"></div>
<svg class="abs" style="left:1750px;top:1052px" width="22" height="22"><path d="M2.6,2 H19.3 L13.2,10 V18.3 H8.7 V10 Z" fill="#fff"/></svg>
<div class="t" style="left:1777.00px;top:1054.46px;font-size:16px;font-weight:bold;color:#fff;letter-spacing:-0.2px;">Filters</div>
<svg class="abs" style="left:0;top:0" width="282" height="1080" viewBox="0 0 282 1080">
<defs><linearGradient id="lg" x1="0" y1="0" x2="0" y2="1"><stop offset="0" stop-color="#58d6f7"/><stop offset="0.5" stop-color="#8f86ee"/><stop offset="1" stop-color="#c24fe6"/></linearGradient></defs>
<circle cx="135.2" cy="101.7" r="69.2" fill="none" stroke="url(#lg)" stroke-width="2"/>
<g fill="none" stroke="#fff" stroke-width="2.35" stroke-linejoin="bevel">
<polyline points="97.5,114.9 97.5,89.8 106.6,112.6 115.7,89.8 115.7,114.9"/>
<polyline points="131,114.9 138.5,90.2 146,114.9"/><line x1="134" y1="106" x2="143" y2="106"/>
<line x1="156.6" y1="90.5" x2="173.5" y2="90.5" stroke-width="3.1"/><line x1="165.05" y1="90.5" x2="165.05" y2="114.9" stroke-width="2.6"/>
</g>
</svg>
<div class="abs" style="left:16px;top:329px;width:232px;height:63px;border-radius:21px;background:#556afb"></div>
<div class="abs" style="left:264px;top:250px;width:6px;height:720px;border-radius:3px;background:#3a47b6"></div>
<div class="abs" style="left:12px;top:984px;width:246px;height:80px;border-radius:21px;background:#2b3a94"></div>
<div class="abs" style="left:262.5px;top:995px;width:31px;height:31px;border-radius:50%;background:#556afb"></div>
<svg class="abs" style="left:262.5px;top:995px" width="31" height="31"><polyline points="19,9.5 13,15.5 19,21.5" fill="none" stroke="#fff" stroke-width="2.6" stroke-linecap="round" stroke-linejoin="round"/></svg>
<div class="t" style="left:71.30px;top:207.30px;font-size:18px;font-weight:bold;color:#fff;letter-spacing:1.1px;-webkit-text-stroke:0.35px #fff;">Homepage</div>
<div class="t" style="left:71.30px;top:268.15px;font-size:18px;font-weight:bold;color:#fff;letter-spacing:0.35px;-webkit-text-stroke:0.35px #fff;">Machine</div>
<div class="t" style="left:71.30px;top:289.75px;font-size:18px;font-weight:bold;color:#fff;letter-spacing:0.35px;-webkit-text-stroke:0.35px #fff;">Supervision</div>
<div class="t" style="left:71.30px;top:350.75px;font-size:18px;font-weight:bold;color:#fff;letter-spacing:0.34px;-webkit-text-stroke:0.35px #fff;">Lean Analytics</div>
<div class="t" style="left:71.30px;top:422.55px;font-size:18px;font-weight:bold;color:#fff;letter-spacing:0.5px;-webkit-text-stroke:0.35px #fff;">Health Monitoring</div>
<div class="t" style="left:71.30px;top:485.15px;font-size:18px;font-weight:bold;color:#fff;letter-spacing:0.6px;-webkit-text-stroke:0.35px #fff;">Consumption</div>
<div class="t" style="left:71.30px;top:506.75px;font-size:18px;font-weight:bold;color:#fff;letter-spacing:0.6px;-webkit-text-stroke:0.35px #fff;">Analytics</div>
<div class="t" style="left:71.30px;top:567.55px;font-size:18px;font-weight:bold;color:#fff;letter-spacing:0.12px;-webkit-text-stroke:0.35px #fff;">KPI Analytics</div>
<div class="t" style="left:71.30px;top:639.55px;font-size:18px;font-weight:bold;color:#fff;letter-spacing:0.4px;-webkit-text-stroke:0.35px #fff;">Machine Recorder</div>
<div class="t" style="left:71.30px;top:700.55px;font-size:18px;font-weight:bold;color:#fff;letter-spacing:0.8px;-webkit-text-stroke:0.35px #fff;">Planning</div>
<div class="t" style="left:71.30px;top:722.15px;font-size:18px;font-weight:bold;color:#fff;letter-spacing:0.8px;-webkit-text-stroke:0.35px #fff;">Calendar</div>
<div class="t" style="left:71.30px;top:772.55px;font-size:18px;font-weight:bold;color:#fff;letter-spacing:0.7px;-webkit-text-stroke:0.35px #fff;">Performance</div>
<div class="t" style="left:71.30px;top:794.15px;font-size:18px;font-weight:bold;color:#fff;letter-spacing:0.7px;-webkit-text-stroke:0.35px #fff;">Settings</div>
<div class="t" style="left:71.30px;top:844.95px;font-size:18px;font-weight:bold;color:#fff;letter-spacing:0.5px;-webkit-text-stroke:0.35px #fff;">Smart</div>
<div class="t" style="left:71.30px;top:866.55px;font-size:18px;font-weight:bold;color:#fff;letter-spacing:0.5px;-webkit-text-stroke:0.35px #fff;">Notifications</div>
<div class="t" style="left:71.30px;top:926.55px;font-size:18px;font-weight:bold;color:#fff;letter-spacing:0.34px;-webkit-text-stroke:0.35px #fff;">Options</div>
<div class="t" style="left:27.50px;top:1001.94px;font-size:13px;font-weight:normal;color:#fff;letter-spacing:0.2px;">Line</div>
<div class="t" style="left:27.50px;top:1029.96px;font-size:16px;font-weight:normal;color:#fff;">Demo Device 1</div>
<svg class="abs" style="left:0;top:0" width="282" height="1080" viewBox="0 0 282 1080" fill="#fff">
<!-- home -->
<path transform="translate(30.5,203.2) scale(1)" d="M10 20v-6h4v6h5v-8h3L12 3 2 12h3v8z"/>
<!-- eye -->
<path d="M42.5,281.5 C34.5,281.5 30,289 29.5,289.5 C30,290 34.5,297.5 42.5,297.5 C50.5,297.5 55,290 55.5,289.5 C55,289 50.5,281.5 42.5,281.5 Z" fill="none" stroke="#fff" stroke-width="2.4"/>
<circle cx="42.5" cy="289.3" r="5.3"/>
<circle cx="40.3" cy="287.2" r="1.6" fill="#2a2390"/>
<!-- trend -->
<g fill="none" stroke="#fff" stroke-width="2.9" stroke-linecap="round" stroke-linejoin="round"><polyline points="33.3,363 40.4,355.3 46,361 52.1,354.8"/></g>
<circle cx="33.3" cy="363" r="2.5"/><circle cx="52.1" cy="354.8" r="2.5"/><circle cx="40.4" cy="355.3" r="2"/><circle cx="46" cy="361" r="2"/>
<!-- heart -->
<path d="M42.5,443.2 L32.5,433.5 C29.5,430.5 30.5,424 36.5,423.7 C39.5,423.6 41.5,425.5 42.5,427 C43.5,425.5 45.5,423.6 48.5,423.7 C54.5,424 55.5,430.5 52.5,433.5 Z"/>
<polyline points="31,432.5 38,432.5 40,428.8 43,437 45,432.5 54,432.5" fill="none" stroke="#1f1c8a" stroke-width="1.6"/>
<!-- bolt -->
<path d="M38.5,495 L47.5,495 L45,502.5 L48.2,502.5 L39.5,514.5 L41,505.5 L36.5,505.5 Z"/>
<!-- kpi bars -->
<rect x="33.5" y="574" width="4" height="8.6"/><rect x="40.3" y="567" width="4" height="15.6"/><rect x="47" y="571" width="4" height="11.6"/>
<!-- recorder -->
<path d="M31,639.8 H54 Q56,639.8 56,641.8 V655.9 Q56,657.9 54,657.9 H51.5 L50,655.5 H35 L33.5,657.9 H31 Q29,657.9 29,655.9 V641.8 Q29,639.8 31,639.8 Z"/>
<rect x="38.5" y="646.4" width="7.8" height="3.6" fill="#1c1a80"/>
<circle cx="34.9" cy="648.2" r="1.8" fill="#1c1a80"/><circle cx="50" cy="648.2" r="1.8" fill="#1c1a80"/>
<!-- calendar -->
<path d="M34,711 H51 V727.5 H34 Z" fill="none" stroke="#fff" stroke-width="2.2"/>
<rect x="33" y="710" width="19" height="5"/>
<rect x="36" y="707.5" width="2.5" height="4"/><rect x="46.5" y="707.5" width="2.5" height="4"/>
<rect x="42.5" y="719.5" width="5" height="4.5"/>
<!-- performance stopwatch -->
<circle cx="42.5" cy="792" r="8.3" fill="none" stroke="#fff" stroke-width="2"/>
<circle cx="42.5" cy="792" r="6.3"/>
<rect x="38.9" y="779.9" width="7.2" height="2.1"/>
<line x1="49.5" y1="785" x2="51" y2="783.5" stroke="#fff" stroke-width="2"/>
<g stroke="#1f1c8a" stroke-width="0.8" fill="none"><line x1="36.5" y1="793.5" x2="42.5" y2="793.5"/><line x1="48.5" y1="790.5" x2="42.5" y2="790.5"/><line x1="39" y1="786.8" x2="42.5" y2="792"/><line x1="46" y1="797.2" x2="42.5" y2="792"/><line x1="45" y1="786.5" x2="42" y2="792"/><line x1="40" y1="797.5" x2="43" y2="792"/></g>
<!-- send -->
<path d="M30.7,855.7 L53.9,865.3 L30.7,875 L30.7,868.2 L45,865.3 L30.7,862.5 Z"/>
<!-- wrench -->
<path d="M33.5,924.5 C31,927 30.5,930.5 32.5,933.5 C34.5,936 38,936.5 40.5,935.5 L50,945 C51,946 52.7,946 53.6,945 C54.5,944 54.5,942.5 53.6,941.5 L44,932 C45,929.5 44.5,926 42,924 C39.5,922 36,922.3 34.5,923.3 L39,927.5 L37.8,931 L34.5,932 L30.5,928 Z" />
</svg>

</body></html>
